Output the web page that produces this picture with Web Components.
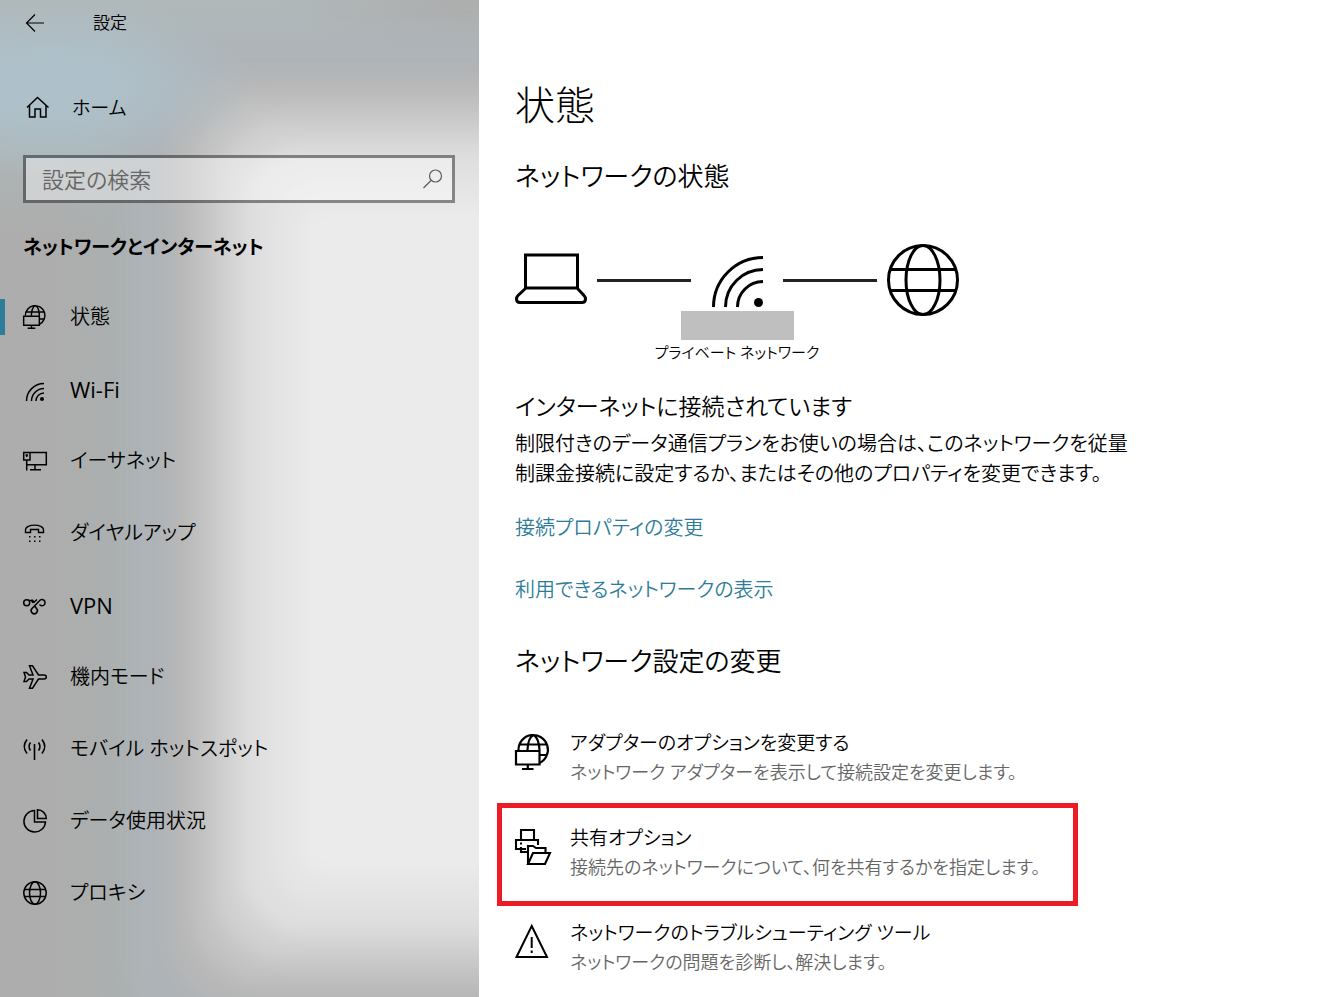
<!DOCTYPE html>
<html lang="ja">
<head>
<meta charset="utf-8">
<title>設定</title>
<style>
  body {
    margin: 0;
    background: #fff;
    color: #000;
    font-family: "Open Sans", "Noto Sans CJK JP", sans-serif;
    font-feature-settings: "palt";
    font-weight: 350;
  }
</style>
</head>
<body>
<settings-app>
  <settings-sidebar slot="sidebar" heading="ネットワークとインターネット">
    <nav-item icon="status" active>状態</nav-item>
    <nav-item icon="wifi" lang="en">Wi-Fi</nav-item>
    <nav-item icon="ethernet">イーサネット</nav-item>
    <nav-item icon="dialup">ダイヤルアップ</nav-item>
    <nav-item icon="vpn" lang="en">VPN</nav-item>
    <nav-item icon="plane">機内モード</nav-item>
    <nav-item icon="hotspot">モバイル ホットスポット</nav-item>
    <nav-item icon="data">データ使用状況</nav-item>
    <nav-item icon="globe">プロキシ</nav-item>
  </settings-sidebar>
  <status-page></status-page>
</settings-app>

<script>
const computerGlobe = '<path d="M3.500 16A14.700 14.700 0 1 1 24.500 29M5 10.500h26M25 21h7.500M12.500 16C12.800 9 15 2.500 18.500 1 22 2.500 24.300 9 24.500 16"/><path d="M1 17h23.500v13.500H1zM12.800 31v4M7 35h11.500"/>';

// all icons are stroked with currentColor, [viewBox size, stroke width, markup]
const icons = {
  back: [24, 1.2, '<path d="M21 12H3.500M12 3.500 3.500 12l8.500 8.500"/>'],
  home: [24, 1.5, '<path d="M3 12.500 13.500 2.500 24.500 12.500M5.500 10.500V22H11v-8h5.500v8H22V10.500"/>'],
  search: [20, 1.2, '<circle cx="13.500" cy="7" r="6"/><path d="M9 11.500 1.500 19"/>'],
  status: [36, 2.2, computerGlobe],
  wifi: [24, 1.5, '<path d="M3.500 24A17.500 17.500 0 0 1 21 6.500M8.500 24A12.500 12.500 0 0 1 21 11.500M13 24a8 8 0 0 1 8-8"/><circle cx="19" cy="22" r="2" fill="currentColor" stroke="none"/>'],
  ethernet: [24, 1.5, '<path d="M7 3.500h16.300v12.300H3.700M.700 3.500H7V11H.700zM3.700 11v10.500M12 16v4.500M7 20.700h11M2.500 6h2.500M3.700 6v2"/>'],
  dialup: [24, 1.4, '<path d="M2.500 11.500V9C2.500 2.500 20.500 2.500 20.500 9v2.500h-5V8.500h-8v3z"/><path d="M6 15.700h1.500M11 15.700h1.500M16 15.700h1.500M6 20.300h1.500M11 20.300h1.500M16 20.300h1.500"/>'],
  vpn: [24, 1.5, '<circle cx="3.700" cy="9.700" r="3"/><path d="M5.500 7.300Q8.500 7 10.500 10M8.500 6.500l2.700 2.500L14 6.500"/><path d="M16.500 11.500a3.100 3.100 0 1 0 0-3.700L9 15.500a3.100 3.100 0 1 0 4.500 0L12 13.500"/>'],
  plane: [24, 1.5, '<path d="M1 7.500h2.500L6 10h4L6.500.800h3L15.500 10H21q2.300 0 2.300 2T21 14h-5.500L9.500 23.200h-3L10 14H6l-2.500 2.500H1L2.500 12z"/>'],
  hotspot: [24, 1.6, '<path d="M11.500 7v16M4 2.500q-5.500 7 0 14M19 2.500q5.500 7 0 14M7.500 5.500q-3 4 0 8M15.500 5.500q3 4 0 8"/>'],
  data: [24, 1.5, '<path d="M11.500 1.500A10.800 10.800 0 1 0 22.500 13H11.500z"/><path d="M14.500.800A8.800 8.800 0 0 1 23.300 9.600h-8.800z"/>'],
  globe: [24, 1.5, '<circle cx="12" cy="12" r="11.200"/><ellipse cx="12" cy="12" rx="5.500" ry="11.200"/><path d="M1.500 8.500h21M1.500 15.500h21"/>'],
  laptop: [72, 3, '<path d="M10.500 11h52v33h-52zM11 44 3 51.500Q1.500 53 1.500 55q0 3.500 3.500 3.500h62q3.500 0 3.500-3.500 0-2-1.500-3.500L62 44"/>'],
  wifiLarge: [72, 3, '<path d="M12.500 63A49.500 49.500 0 0 1 62 13.500M24.500 63A37.500 37.500 0 0 1 62 25.500M36.500 63A25.500 25.500 0 0 1 62 37.500"/><circle cx="57.500" cy="58.500" r="4.500" fill="currentColor" stroke="none"/>'],
  globeLarge: [72, 3, '<circle cx="36" cy="36" r="34.500"/><ellipse cx="36" cy="36" rx="17" ry="34.500"/><path d="M3 25.500h66M3 46.500h66"/>'],
  adapter: [36, 2.2, computerGlobe],
  share: [36, 2.1, '<path d="M6 11V1h13v10M11 20H1v-9h22v5M6 18v5h6M13 35V17h5l3 2h9.500V24M13 35l5-11h17l-5 11z"/><path d="M5 14.500h2"/>'],
  warning: [36, 2, '<path d="M16.700 2 32 33H1.500zM16.700 13v11M16.700 26.500V29"/>'],
};

class UiIcon extends HTMLElement {
  constructor() {
    super();
    this.attachShadow({ mode: 'open' });
  }

  connectedCallback() {
    const [box, stroke, markup] = icons[this.getAttribute('name')];
    this.shadowRoot.innerHTML = `
      <style>
        :host { display: block; flex: none; width: 24px; height: 24px; }
        svg { display: block; width: 100%; height: 100%; overflow: visible; }
      </style>
      <svg viewBox="0 0 ${box} ${box}" fill="none" stroke="currentColor" stroke-width="${stroke}" aria-hidden="true">${markup}</svg>`;
  }
}
customElements.define('ui-icon', UiIcon);

class NavItem extends HTMLElement {
  constructor() {
    super();
    this.attachShadow({ mode: 'open' });
  }

  connectedCallback() {
    this.shadowRoot.innerHTML = `
      <style>
        :host { display: block; }
        a {
          display: flex;
          align-items: center;
          height: 72px;
          color: inherit;
          text-decoration: none;
          font-size: 20px;
          line-height: 32px;
        }
        :host([lang="en"]) a { font-size: 22px; font-weight: 400; }
        a::before { content: ""; width: 5px; height: 36px; margin-right: 18px; }
        :host([active]) a::before { background: #2d7d9a; }
        ui-icon { margin-right: 23px; }
      </style>
      <a href="#${this.getAttribute('icon')}">
        <ui-icon name="${this.getAttribute('icon')}"></ui-icon>
        <span><slot></slot></span>
      </a>`;
  }
}
customElements.define('nav-item', NavItem);

class SearchBox extends HTMLElement {
  constructor() {
    super();
    this.attachShadow({ mode: 'open' });
    this.shadowRoot.innerHTML = `
      <style>
        :host { display: block; }
        label {
          display: flex;
          align-items: center;
          box-sizing: border-box;
          height: 48px;
          padding: 0 10px 0 16px;
          border: 3px solid rgba(0, 0, 0, .42);
          background: rgba(255, 255, 255, .4);
          background-clip: padding-box;
          color: #5c5c5c;
        }
        input {
          flex: 1;
          min-width: 0;
          padding: 0;
          border: 0;
          outline: 0;
          background: none;
          font: inherit;
          font-feature-settings: inherit;
          font-size: 22px;
          color: #000;
        }
        input::placeholder { color: #666; opacity: 1; }
        ui-icon { width: 20px; height: 20px; }
      </style>
      <label>
        <input type="text" placeholder="設定の検索" aria-label="設定の検索">
        <ui-icon name="search"></ui-icon>
      </label>`;
  }
}
customElements.define('search-box', SearchBox);

class SettingsSidebar extends HTMLElement {
  constructor() {
    super();
    this.attachShadow({ mode: 'open' });
  }

  connectedCallback() {
    this.shadowRoot.innerHTML = `
      <style>
        :host {
          display: block;
          position: relative;
          overflow: hidden;
          z-index: 0;
          background:
            radial-gradient(ellipse 200px 60px at 100% 0, #adadad, rgba(173, 173, 173, 0)),
            linear-gradient(#b0b8ba, #adb6b8 150px, rgba(173, 173, 173, 0) 230px),
            linear-gradient(90deg, #adadad 60px, #abb0b0 120px);
        }
        /* blurred wallpaper behind the acrylic */
        .glow, .sky { position: absolute; z-index: -1; }
        .glow {
          inset: 205px -140px 122px 300px;
          border-radius: 20px;
          background: #ebebeb;
          box-shadow:
            0 0 0 30px #e5e5e5,
            0 0 0 60px #dfdfdf,
            0 0 0 85px #d1d1d1,
            0 0 0 108px #c3c3c3,
            0 0 0 132px #b7b7b7,
            0 0 0 172px #aeb3b7;
          filter: blur(10px);
        }
        .sky {
          inset: 0 40% auto 0;
          height: 180px;
          background: radial-gradient(ellipse 210px 90px at 50px 85px, #aec0c9 30%, rgba(174, 192, 201, 0));
        }
        header {
          display: flex;
          align-items: center;
          height: 45px;
          padding-left: 23px;
        }
        header button {
          margin: 0 46px 0 0;
          padding: 0;
          border: 0;
          background: none;
          color: inherit;
        }
        header span { font-size: 17px; line-height: 24px; }
        .home {
          display: flex;
          align-items: center;
          gap: 24px;
          height: 72px;
          margin: 26px 24px 12px;
          color: inherit;
          text-decoration: none;
          font-size: 19px;
        }
        search-box { margin: 0 24px 0 23px; }
        h2 {
          margin: 26px 24px 16px 23px;
          font-size: 19px;
          line-height: 36px;
          font-weight: 700;
        }
      </style>
      <div class="glow"></div>
      <div class="sky"></div>
      <header>
        <button type="button" aria-label="戻る"><ui-icon name="back"></ui-icon></button>
        <span>設定</span>
      </header>
      <a class="home" href="#home"><ui-icon name="home"></ui-icon>ホーム</a>
      <search-box></search-box>
      <h2>${this.getAttribute('heading')}</h2>
      <nav><slot></slot></nav>`;
  }
}
customElements.define('settings-sidebar', SettingsSidebar);

class NetworkDiagram extends HTMLElement {
  constructor() {
    super();
    this.attachShadow({ mode: 'open' });
    this.shadowRoot.innerHTML = `
      <style>
        :host { display: flex; flex-direction: column; align-items: center; width: max-content; }
        .row { display: flex; align-items: center; gap: 10px; }
        ui-icon { width: 72px; height: 72px; }
        .line { width: 94px; height: 3px; background: #222; }
        .name { width: 113px; height: 29px; margin-top: -5px; background: #bfbfbf; }
        .caption { font-size: 15px; line-height: 24px; }
      </style>
      <div class="row">
        <ui-icon name="laptop"></ui-icon>
        <div class="line"></div>
        <ui-icon name="wifiLarge"></ui-icon>
        <div class="line"></div>
        <ui-icon name="globeLarge"></ui-icon>
      </div>
      <div class="name"></div>
      <div class="caption"><slot></slot></div>`;
  }
}
customElements.define('network-diagram', NetworkDiagram);

class OptionRow extends HTMLElement {
  constructor() {
    super();
    this.attachShadow({ mode: 'open' });
  }

  connectedCallback() {
    this.shadowRoot.innerHTML = `
      <style>
        :host { display: block; position: relative; max-width: 545px; }
        /* callout frame drawn round the row */
        :host([marked])::after {
          content: "";
          position: absolute;
          inset: -4px -18px;
          border: 5px solid #ed1c24;
          pointer-events: none;
        }
        button {
          display: flex;
          gap: 19px;
          width: 100%;
          padding: 16px 0 21px;
          border: 0;
          background: none;
          color: inherit;
          font: inherit;
          font-feature-settings: inherit;
          text-align: left;
        }
        ui-icon { width: 36px; height: 36px; margin-top: 6px; }
        .title { display: block; font-size: 19px; line-height: 30px; }
        .text { display: block; font-size: 18px; line-height: 28px; color: #666; }
      </style>
      <button type="button">
        <ui-icon name="${this.getAttribute('icon')}"></ui-icon>
        <span>
          <span class="title"><slot name="title"></slot></span>
          <span class="text"><slot></slot></span>
        </span>
      </button>`;
  }
}
customElements.define('option-row', OptionRow);

class StatusPage extends HTMLElement {
  constructor() {
    super();
    this.attachShadow({ mode: 'open' });
    this.shadowRoot.innerHTML = `
      <style>
        :host { display: block; padding: 79px 36px 0; }
        h1, h2, h3, p { margin: 0; font-weight: inherit; }
        h1 { font-size: 40px; line-height: 52px; margin-bottom: 27px; font-weight: 300; }
        h2 { font-size: 26px; line-height: 36px; }
        h3 { font-size: 23px; line-height: 36px; margin: 24px 0 5px; }
        network-diagram { margin-top: 50px; }
        p { max-width: 620px; font-size: 20px; line-height: 30px; }
        .links { display: grid; justify-items: start; gap: 32px; margin: 24px 0 38px; }
        a { color: #2d7d9a; text-decoration: none; font-size: 20px; line-height: 30px; }
        .options { margin-top: 33px; }
      </style>
      <h1>状態</h1>
      <h2>ネットワークの状態</h2>
      <network-diagram>プライベート ネットワーク</network-diagram>
      <h3>インターネットに接続されています</h3>
      <p>制限付きのデータ通信プランをお使いの場合は、このネットワークを従量制課金接続に設定するか、またはその他のプロパティを変更できます。</p>
      <div class="links">
        <a href="#properties">接続プロパティの変更</a>
        <a href="#networks">利用できるネットワークの表示</a>
      </div>
      <h2>ネットワーク設定の変更</h2>
      <div class="options">
        <option-row icon="adapter">
          <span slot="title">アダプターのオプションを変更する</span>
          ネットワーク アダプターを表示して接続設定を変更します。
        </option-row>
        <option-row icon="share" marked>
          <span slot="title">共有オプション</span>
          接続先のネットワークについて、何を共有するかを指定します。
        </option-row>
        <option-row icon="warning">
          <span slot="title">ネットワークのトラブルシューティング ツール</span>
          ネットワークの問題を診断し、解決します。
        </option-row>
      </div>`;
  }
}
customElements.define('status-page', StatusPage);

class SettingsApp extends HTMLElement {
  constructor() {
    super();
    this.attachShadow({ mode: 'open' });
    this.shadowRoot.innerHTML = `
      <style>
        :host { display: flex; min-height: 100vh; }
        aside { display: grid; flex: 0 0 479px; }
        main { flex: 1; min-width: 0; }
      </style>
      <aside><slot name="sidebar"></slot></aside>
      <main><slot></slot></main>`;
  }
}
customElements.define('settings-app', SettingsApp);
</script>
</body>
</html>
